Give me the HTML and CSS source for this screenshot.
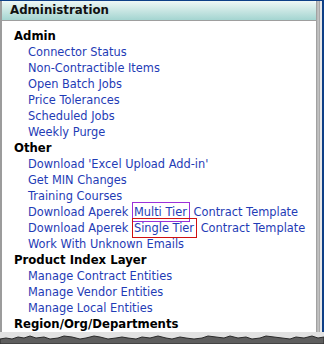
FILE: index.html
```html
<!DOCTYPE html>
<html lang="en">
<head>
    <meta charset="UTF-8">
    <title>Administration</title>
    <link rel="stylesheet" href="styles.css">
</head>
<body>
<div class="frame">
    <div class="window">
        <div class="panel">
            <div class="title">Administration</div>
            <div class="menu">
                <h3>Admin</h3>
                <ul>
                    <li><a href="#">Connector Status</a></li>
                    <li><a href="#">Non-Contractible Items</a></li>
                    <li><a href="#">Open Batch Jobs</a></li>
                    <li><a href="#">Price Tolerances</a></li>
                    <li><a href="#">Scheduled Jobs</a></li>
                    <li><a href="#">Weekly Purge</a></li>
                </ul>
                <h3>Other</h3>
                <ul>
                    <li><a href="#">Download 'Excel Upload Add-in'</a></li>
                    <li><a href="#">Get MIN Changes</a></li>
                    <li><a href="#">Training Courses</a></li>
                    <li><a href="#">Download Aperek <span class="mark multi">Multi Tier</span> Contract Template</a></li>
                    <li><a href="#">Download Aperek <span class="mark single">Single Tier</span> Contract Template</a></li>
                    <li><a href="#">Work With Unknown Emails</a></li>
                </ul>
                <h3>Product Index Layer</h3>
                <ul>
                    <li><a href="#">Manage Contract Entities</a></li>
                    <li><a href="#">Manage Vendor Entities</a></li>
                    <li><a href="#">Manage Local Entities</a></li>
                </ul>
                <h3>Region/Org/Departments</h3>
            </div>
        </div>
        <div class="edge"></div>
    </div>
    <!--撕边-->
    <div class="torn">
        <svg width="324" height="12" viewBox="0 0 324 12">
            <polygon fill="#5e5e5e" stroke="#2a2a2a" stroke-width="1"
                     points="0,12 0,7 6,6 12,7 18,5 24,6 30,4 36,6 44,5 50,7 58,6 64,4 72,5 80,7 86,6 94,4 100,5 108,7 116,6 122,5 128,6 136,7 142,5 150,6 158,4 166,6 172,7 180,5 186,6 194,7 202,6 208,4 216,5 224,6 230,4 238,6 246,5 252,7 260,6 266,4 274,5 282,6 290,7 296,5 304,6 312,4 318,6 324,5 324,12"/>
        </svg>
    </div>
</div>
</body>
</html>
```

FILE: styles.css
```css
* {
    margin: 0;
    padding: 0
}

ul {
    list-style: none
}

body {
    background: #fff;
}

.frame {
    width: 324px;
    height: 344px;
    background-color: #0d3f86;
    padding-top: 1px;
    box-sizing: border-box;
    display: flex;
    flex-direction: column;
    overflow: hidden;
    font-family: "DejaVu Sans", Verdana, sans-serif;
}

.window {
    flex: 1;
    display: flex;
    min-height: 0;
}

.panel {
    width: 314px;
    background-color: #fff;
    border-left: 2px solid #9c9c9c;
    display: flex;
    flex-direction: column;
    overflow: hidden;
}

.title {
    height: 19px;
    line-height: 19px;
    padding-left: 8px;
    font-size: 11.8px;
    font-weight: bold;
    color: #111;
    background: linear-gradient(#eef7f5, #a4d5d1);
    border-bottom: 1px solid #9e9e9e;
    border-top-left-radius: 3px;
    border-top-right-radius: 3px;
}

.menu {
    padding: 7px 0 0 12px;
    font-size: 11.4px;
    line-height: 16px;
    border-bottom: 1px solid #e4e4e4;
}

.menu h3 {
    font-size: 11.7px;
    font-weight: bold;
    color: #000;
}

.menu li {
    padding-left: 14px;
    white-space: nowrap;
}

.menu a {
    color: #1f3cb6;
    text-decoration: none;
}

.mark {
    padding: 2px 2px 2px 1px;
}

.mark.multi {
    border: 1px solid #9b30d9;
}

.mark.single {
    border: 1px solid #d01010;
}

.edge {
    width: 8px;
    background: linear-gradient(to right, #8a8a8a 0, #b8b8b8 1px, #c4c4c4 3px, #8e8e8e 4px, #e8e8e8 4px, #e8e8e8 6px, #0d3f86 6px);
}

.torn {
    height: 12px;
    background-color: #e2e2e2;
}

.torn svg {
    display: block;
}
```
